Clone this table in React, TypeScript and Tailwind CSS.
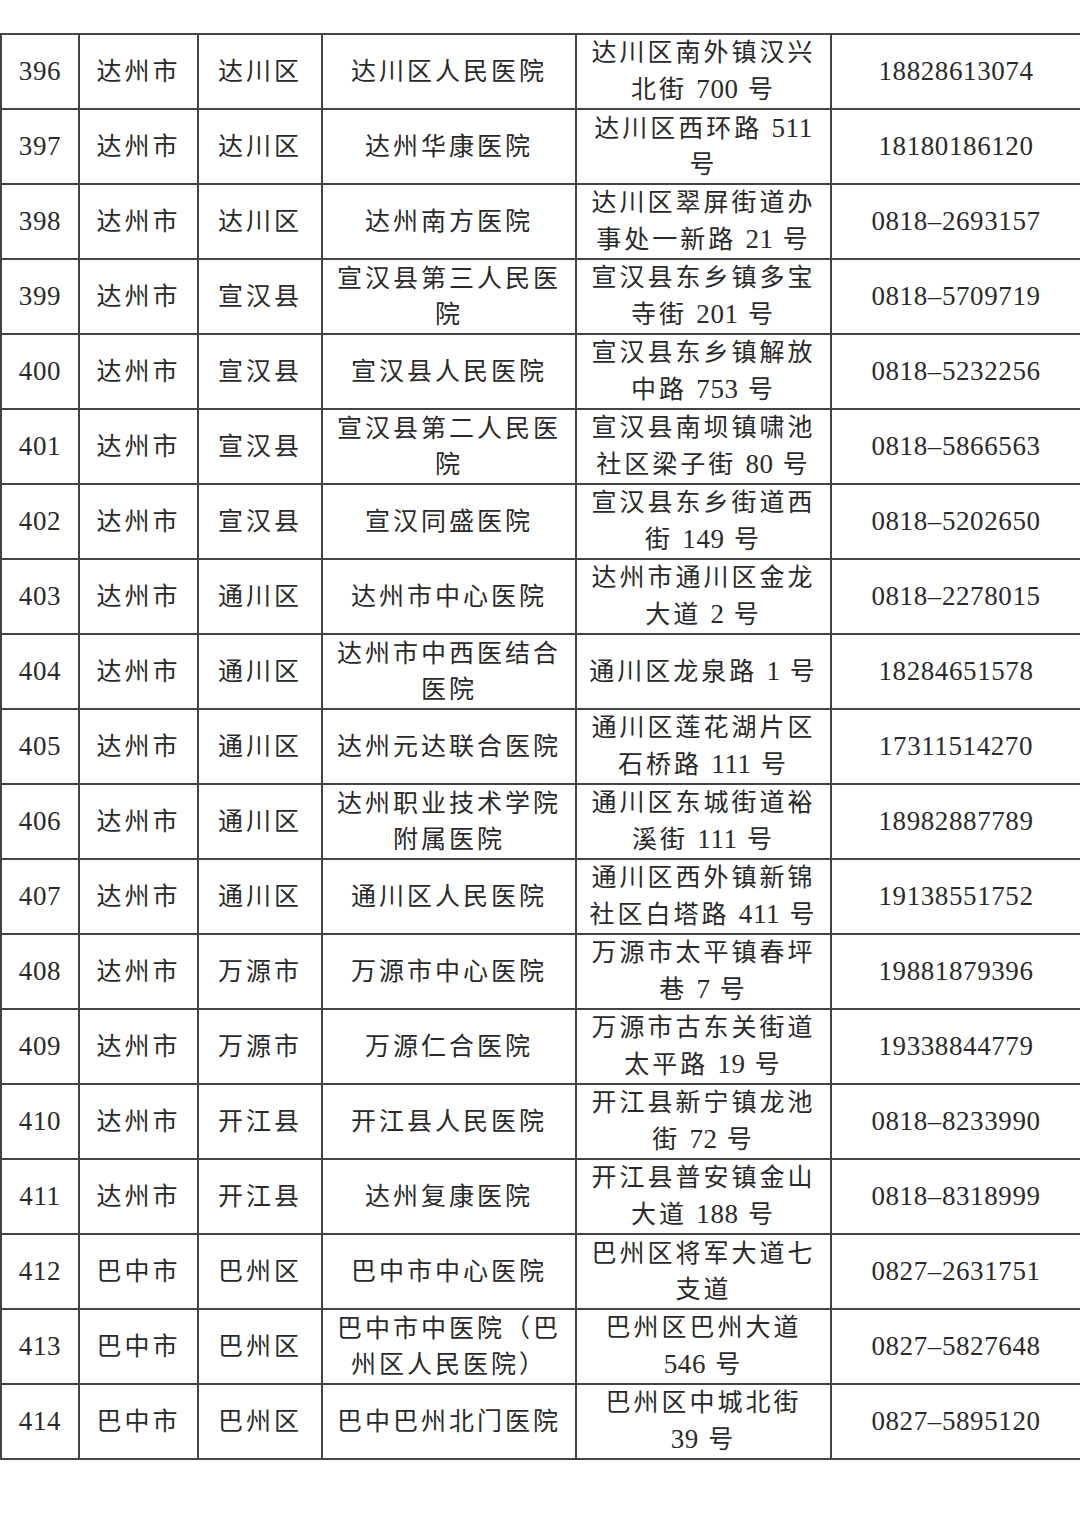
type Row = {
  no: string;
  city: string;
  district: string;
  hospital: string[];
  address: string[];
  phone: string;
};

const rows: Row[] = [
  { no: "396", city: "达州市", district: "达川区", hospital: ["达川区人民医院"], address: ["达川区南外镇汉兴", "北街 700 号"], phone: "18828613074" },
  { no: "397", city: "达州市", district: "达川区", hospital: ["达州华康医院"], address: ["达川区西环路 511", "号"], phone: "18180186120" },
  { no: "398", city: "达州市", district: "达川区", hospital: ["达州南方医院"], address: ["达川区翠屏街道办", "事处一新路 21 号"], phone: "0818–2693157" },
  { no: "399", city: "达州市", district: "宣汉县", hospital: ["宣汉县第三人民医", "院"], address: ["宣汉县东乡镇多宝", "寺街 201 号"], phone: "0818–5709719" },
  { no: "400", city: "达州市", district: "宣汉县", hospital: ["宣汉县人民医院"], address: ["宣汉县东乡镇解放", "中路 753 号"], phone: "0818–5232256" },
  { no: "401", city: "达州市", district: "宣汉县", hospital: ["宣汉县第二人民医", "院"], address: ["宣汉县南坝镇啸池", "社区梁子街 80 号"], phone: "0818–5866563" },
  { no: "402", city: "达州市", district: "宣汉县", hospital: ["宣汉同盛医院"], address: ["宣汉县东乡街道西", "街 149 号"], phone: "0818–5202650" },
  { no: "403", city: "达州市", district: "通川区", hospital: ["达州市中心医院"], address: ["达州市通川区金龙", "大道 2 号"], phone: "0818–2278015" },
  { no: "404", city: "达州市", district: "通川区", hospital: ["达州市中西医结合", "医院"], address: ["通川区龙泉路 1 号"], phone: "18284651578" },
  { no: "405", city: "达州市", district: "通川区", hospital: ["达州元达联合医院"], address: ["通川区莲花湖片区", "石桥路 111 号"], phone: "17311514270" },
  { no: "406", city: "达州市", district: "通川区", hospital: ["达州职业技术学院", "附属医院"], address: ["通川区东城街道裕", "溪街 111 号"], phone: "18982887789" },
  { no: "407", city: "达州市", district: "通川区", hospital: ["通川区人民医院"], address: ["通川区西外镇新锦", "社区白塔路 411 号"], phone: "19138551752" },
  { no: "408", city: "达州市", district: "万源市", hospital: ["万源市中心医院"], address: ["万源市太平镇春坪", "巷 7 号"], phone: "19881879396" },
  { no: "409", city: "达州市", district: "万源市", hospital: ["万源仁合医院"], address: ["万源市古东关街道", "太平路 19 号"], phone: "19338844779" },
  { no: "410", city: "达州市", district: "开江县", hospital: ["开江县人民医院"], address: ["开江县新宁镇龙池", "街 72 号"], phone: "0818–8233990" },
  { no: "411", city: "达州市", district: "开江县", hospital: ["达州复康医院"], address: ["开江县普安镇金山", "大道 188 号"], phone: "0818–8318999" },
  { no: "412", city: "巴中市", district: "巴州区", hospital: ["巴中市中心医院"], address: ["巴州区将军大道七", "支道"], phone: "0827–2631751" },
  { no: "413", city: "巴中市", district: "巴州区", hospital: ["巴中市中医院（巴", "州区人民医院）"], address: ["巴州区巴州大道", "546 号"], phone: "0827–5827648" },
  { no: "414", city: "巴中市", district: "巴州区", hospital: ["巴中巴州北门医院"], address: ["巴州区中城北街", "39 号"], phone: "0827–5895120" },
];

// digits get the Latin serif at a slightly larger size, like the Song font's figures
function Txt({ s }: { s: string }) {
  const parts = s.split(/([0-9–]+)/);
  return (
    <>
      {parts.map((p, i) =>
        /[0-9]/.test(p) ? (
          <span key={i} className="text-[27px] tracking-[0.6px]">
            {p}
          </span>
        ) : (
          <span key={i}>{p}</span>
        )
      )}
    </>
  );
}

function Cell({ lines }: { lines: string[] }) {
  return (
    <td className="h-[75px] border-2 border-[#444] p-0 text-center align-middle">
      {lines.map((l, i) => (
        <div key={i} className="whitespace-nowrap leading-[36px]">
          <Txt s={l} />
        </div>
      ))}
    </td>
  );
}

export default function App() {
  return (
    <div
      className="min-h-[1529px] w-[1080px] bg-white pt-[33px] text-[25px] tracking-[3px] text-[#2a2a2a]"
      style={{ fontFamily: '"Liberation Serif", "Noto Sans CJK SC", serif' }}
    >
      <table className="w-[1080px] table-fixed border-collapse">
        <colgroup>
          <col className="w-[78px]" />
          <col className="w-[119px]" />
          <col className="w-[124px]" />
          <col className="w-[254px]" />
          <col className="w-[255px]" />
          <col className="w-[250px]" />
        </colgroup>
        <tbody>
          {rows.map((r) => (
            <tr key={r.no}>
              <Cell lines={[r.no]} />
              <Cell lines={[r.city]} />
              <Cell lines={[r.district]} />
              <Cell lines={r.hospital} />
              <Cell lines={r.address} />
              <Cell lines={[r.phone]} />
            </tr>
          ))}
        </tbody>
      </table>
    </div>
  );
}
